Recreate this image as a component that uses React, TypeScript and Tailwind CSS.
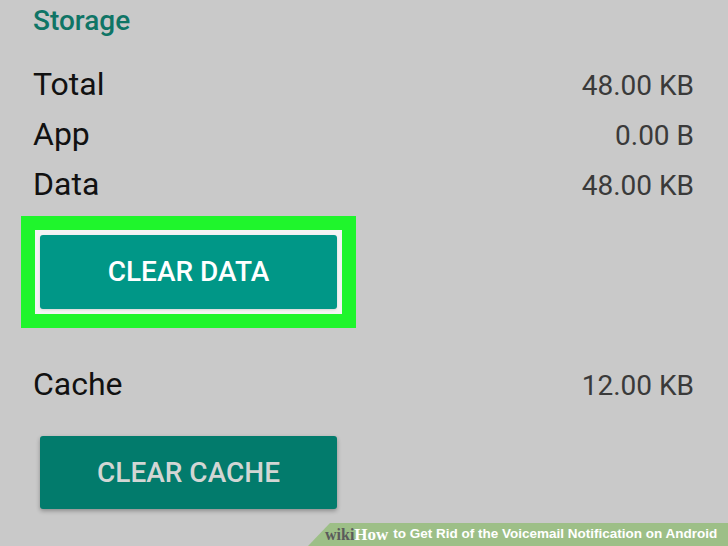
import React from 'react'

function Row({ label, value }: { label: string; value: string }) {
    return (
        <div className="flex items-baseline justify-between h-[50px] leading-[50px]">
            <span className="text-[32px] text-[#111]">{label}</span>
            <span className="text-[28px] text-[#3a3a3a]">{value}</span>
        </div>
    )
}

export default function App() {
    return (
        <div
            className="relative w-[728px] h-[546px] overflow-hidden bg-[#c9c9c9] pl-[33px] pr-[34px] pt-[6px]"
            style={{ fontFamily: 'Roboto, "Liberation Sans", sans-serif' }}
        >
            <div className="text-[28px] leading-[30px] font-medium text-[#0f7566]">Storage</div>
            <div className="mt-[23px]">
                <Row label="Total" value="48.00 KB" />
                <Row label="App" value="0.00 B" />
                <Row label="Data" value="48.00 KB" />
            </div>

            <div className="-ml-[12px] mt-[7px] w-[335px] h-[112px] bg-[#1ff52c] p-[14px]">
                <div className="h-full bg-[#f4f4f4] p-[5px]">
                    <div className="h-full rounded-[3px] bg-[#009787] flex items-center justify-center text-[28px] font-medium text-white shadow-sm">
                        CLEAR DATA
                    </div>
                </div>
            </div>

            <div className="mt-[31px]">
                <Row label="Cache" value="12.00 KB" />
            </div>

            <div className="mt-[27px] ml-[7px] w-[297px] h-[73px] rounded-[3px] bg-[#027b6c] flex items-center justify-center text-[28px] font-medium text-[#d2d6d4] shadow-[0_2px_4px_rgba(0,0,0,0.3)]">
                CLEAR CACHE
            </div>

            <div className="absolute bottom-0 right-0 w-[420px] h-[23px] bg-[#9dbf87] [clip-path:polygon(22px_0,100%_0,100%_100%,0_100%)] flex items-center pl-[17px] whitespace-nowrap">
                <span
                    className="text-[16px] font-bold text-[#5b5b5b]"
                    style={{ fontFamily: '"Liberation Serif", serif' }}
                >
                    wiki
                </span>
                <span
                    className="text-[17px] font-bold text-white"
                    style={{ fontFamily: '"Liberation Serif", serif' }}
                >
                    How
                </span>
                <span
                    className="ml-[5px] text-[13.5px] font-bold text-white"
                    style={{ fontFamily: '"Liberation Sans", sans-serif' }}
                >
                    to Get Rid of the Voicemail Notification on Android
                </span>
            </div>
        </div>
    )
}
